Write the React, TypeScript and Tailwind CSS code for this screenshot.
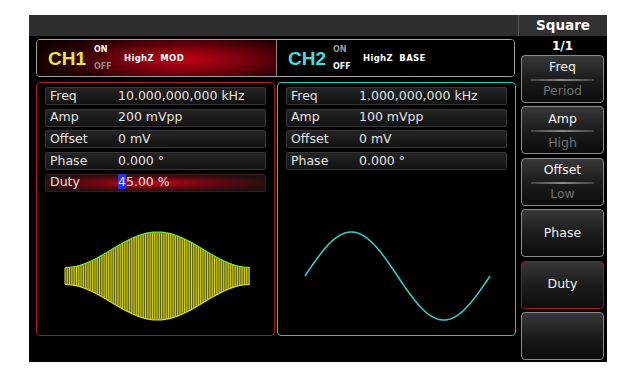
import React from "react";

const font = { fontFamily: '"DejaVu Sans", "Liberation Sans", sans-serif' };

interface Param {
  label: string;
  value: React.ReactNode;
  active?: boolean;
}

const ch1Params: Param[] = [
  { label: "Freq", value: "10.000,000,000 kHz" },
  { label: "Amp", value: "200 mVpp" },
  { label: "Offset", value: "0 mV" },
  { label: "Phase", value: "0.000 °" },
  {
    label: "Duty",
    value: (
      <>
        <span className="bg-[#2434f4]">4</span>5.00 %
      </>
    ),
    active: true,
  },
];

const ch2Params: Param[] = [
  { label: "Freq", value: "1.000,000,000 kHz" },
  { label: "Amp", value: "100 mVpp" },
  { label: "Offset", value: "0 mV" },
  { label: "Phase", value: "0.000 °" },
];

function ParamRow({ label, value, active }: Param) {
  return (
    <div
      className={
        "h-[18px] flex items-center rounded-[2px] border pl-[4px] text-[12.5px] leading-none text-[#e4e4e4] " +
        (active
          ? "border-[#3a1a1a] bg-[radial-gradient(ellipse_at_48%_50%,#c0081a_0%,#6a0610_40%,#1c1010_80%)]"
          : "border-[#363636] bg-gradient-to-b from-[#242424] to-[#121212]")
      }
    >
      <span className="w-[68px]">{label}</span>
      <span>{value}</span>
    </div>
  );
}

function ModWave() {
  const c = 84;
  const env = (x: number) => 26.25 - 17.75 * Math.cos((2 * Math.PI * (x - 28)) / 185);
  const lines: number[] = [];
  for (let x = 28; x <= 213; x += 2.3) lines.push(x);
  const top: string[] = [];
  const bottom: string[] = [];
  for (let x = 28; x <= 213; x += 1) {
    top.push(`${x},${(c - env(x)).toFixed(2)}`);
    bottom.push(`${x},${(c + env(x)).toFixed(2)}`);
  }
  return (
    <svg width="237" height="143" className="block">
      <polygon points={[...top, ...bottom.slice().reverse()].join(" ")} fill="#5e5e0c" />
      {lines.map((x) => (
        <line
          key={x}
          x1={x}
          x2={x}
          y1={c - env(x)}
          y2={c + env(x)}
          stroke="#d2d22a"
          strokeWidth="1.1"
        />
      ))}
      <polyline points={top.join(" ")} fill="none" stroke="#74e038" strokeWidth="1.2" />
      <polyline points={bottom.join(" ")} fill="none" stroke="#d8d830" strokeWidth="1.2" />
    </svg>
  );
}

function SineWave() {
  const pts: string[] = [];
  for (let x = 27; x <= 212; x += 1) {
    pts.push(`${x},${(84 - 44 * Math.sin((2 * Math.PI * (x - 27)) / 185)).toFixed(2)}`);
  }
  return (
    <svg width="237" height="143" className="block">
      <polyline points={pts.join(" ")} fill="none" stroke="#3fc4c4" strokeWidth="1.6" />
    </svg>
  );
}

function Panel({ params, color, wave }: { params: Param[]; color: string; wave: React.ReactNode }) {
  return (
    <div className={"w-[239px] h-[254px] rounded-[4px] border flex flex-col " + color}>
      <div className="flex flex-col gap-[3.67px] pt-[4px] pl-[8px] pr-[8px] h-[109px]">
        {params.map((p) => (
          <ParamRow key={p.label} {...p} />
        ))}
      </div>
      {wave}
    </div>
  );
}

function SoftKey({ top, bottom, active }: { top?: string; bottom?: string; active?: boolean }) {
  return (
    <div
      className={
        "h-[48px] w-[83px] rounded-[4px] border flex flex-col bg-gradient-to-b from-[#383838] via-[#1c1c1c] to-[#0c0c0c] text-[12.5px] leading-none " +
        (active ? "border-[#a01424]" : "border-[#8c8c8c]")
      }
    >
      {top && bottom ? (
        <>
          <div className="h-[23px] flex items-center justify-center text-[#f2f2f2]">{top}</div>
          <div className="mx-[9px] h-[2px] bg-gradient-to-r from-[#444] via-[#8a8a8a] to-[#444]" />
          <div className="flex-1 flex items-center justify-center text-[#727272]">{bottom}</div>
        </>
      ) : top ? (
        <div className="flex-1 flex items-center justify-center text-[#f2f2f2]">{top}</div>
      ) : null}
    </div>
  );
}

export default function App() {
  return (
    <div className="w-[633px] h-[376px] bg-white pt-[15px] pl-[29px]" style={font}>
      <div className="w-[578px] h-[347px] bg-black flex flex-col overflow-hidden">
        <div className="flex h-[21px]">
          <div className="flex-1 bg-[#2e2e2e]" />
          <div className="w-[89px] bg-[#313131] border-l border-[#5c5c5c] flex items-center justify-center text-white font-bold text-[13.5px]">
            Square
          </div>
        </div>

        <div className="flex flex-1">
          <div className="w-[489px] pl-[7px] pt-[3px] flex flex-col">
            <div className="w-[479px] h-[38px] rounded-[4px] border border-[#a4a4a4] flex overflow-hidden">
              <div className="w-[240px] border-r border-[#8a8a8a] flex items-center pl-[11px] bg-[radial-gradient(ellipse_70%_95%_at_62%_55%,#c20014_0%,#7a000c_35%,#2a0004_70%,#0c0000_100%)]">
                <span
                  className="text-[19px] font-bold text-[#ece640] leading-none"
                  style={{ fontFamily: '"Liberation Sans", sans-serif' }}
                >
                  CH1
                </span>
                <div className="ml-[8px] w-[30px] flex flex-col gap-[9px] text-[8px] font-bold leading-none pt-[1px]">
                  <span className="text-white">ON</span>
                  <span className="text-[#8c8c8c]">OFF</span>
                </div>
                <span className="text-[8.5px] font-bold text-white tracking-[0.3px]">HighZ&nbsp; MOD</span>
              </div>
              <div className="flex-1 flex items-center pl-[11px] bg-black">
                <span
                  className="text-[19px] font-bold text-[#42dede] leading-none"
                  style={{ fontFamily: '"Liberation Sans", sans-serif' }}
                >
                  CH2
                </span>
                <div className="ml-[7px] w-[30px] flex flex-col gap-[9px] text-[8px] font-bold leading-none pt-[1px]">
                  <span className="text-[#9a9a9a]">ON</span>
                  <span className="text-white">OFF</span>
                </div>
                <span className="text-[8.5px] font-bold text-white tracking-[0.3px]">HighZ&nbsp; BASE</span>
              </div>
            </div>

            <div className="flex gap-[2px] mt-[5px]">
              <Panel params={ch1Params} color="border-[#b0121e]" wave={<ModWave />} />
              <Panel params={ch2Params} color="border-[#3cbcbc]" wave={<SineWave />} />
            </div>
          </div>

          <div className="w-[89px] flex flex-col items-center">
            <div className="h-[19px] flex items-center text-white text-[12px] font-bold">1/1</div>
            <div className="flex flex-col gap-[3.4px]">
              <SoftKey top="Freq" bottom="Period" />
              <SoftKey top="Amp" bottom="High" />
              <SoftKey top="Offset" bottom="Low" />
              <SoftKey top="Phase" />
              <SoftKey top="Duty" active />
              <SoftKey />
            </div>
          </div>
        </div>
      </div>
    </div>
  );
}
